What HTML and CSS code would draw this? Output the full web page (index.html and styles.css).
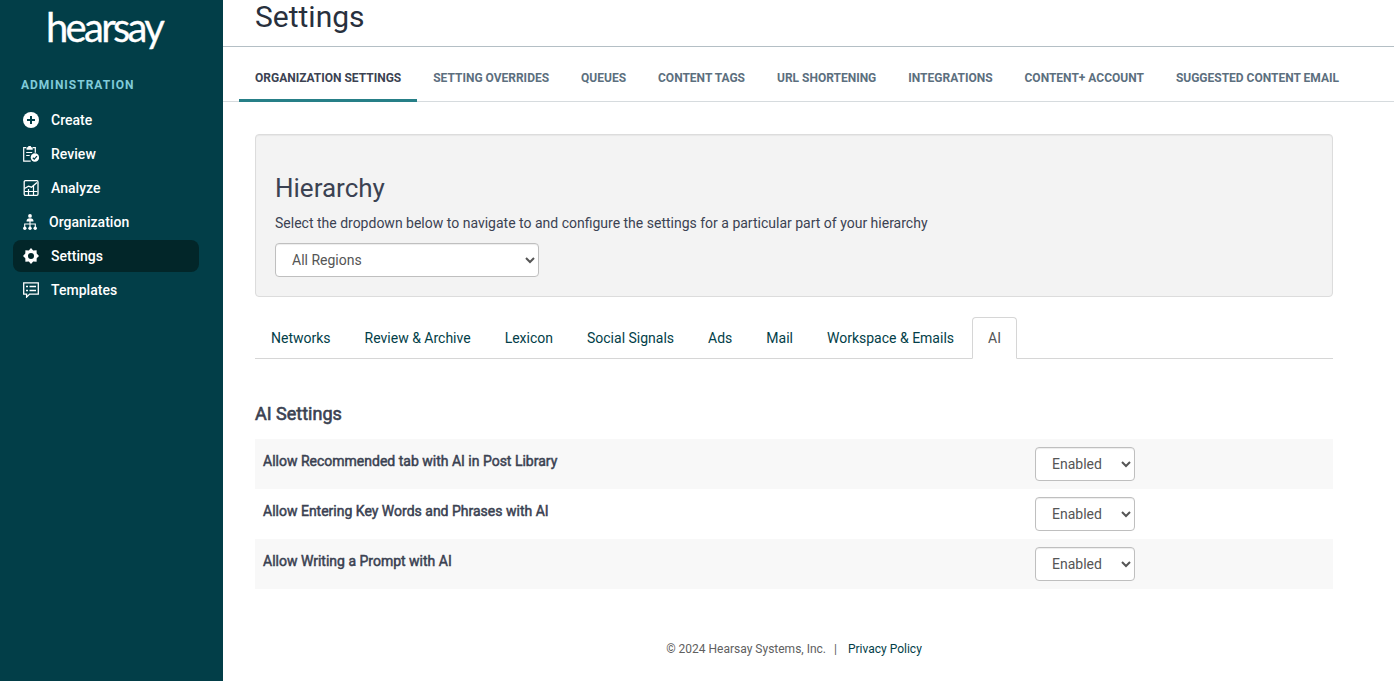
FILE: index.html
```html
<!DOCTYPE html>
<html lang="en">
<head>
    <meta charset="UTF-8">
    <meta name="viewport" content="width=device-width, initial-scale=1.0">
    <title>Settings | Hearsay</title>
    <link rel="stylesheet" href="styles.css">
</head>
<body>
    <aside class="sidebar">
        <div class="logo">hearsay</div>
        <h2 class="sidebar-title">Administration</h2>
        <nav class="side-nav">
            <a class="side-link" href="#">
                <svg class="icon" viewBox="0 0 16 16"><circle cx="8" cy="8" r="8" fill="#fff"/><path d="M8 4v8M4 8h8" stroke="#023e48" stroke-width="2"/></svg>
                <span>Create</span>
            </a>
            <a class="side-link" href="#">
                <svg class="icon" viewBox="0 0 16 16"><path d="M3 1.7H.7v13.4h7M10 1.7h2.3v5" fill="none" stroke="#fff" stroke-width="1.2"/><path d="M3.5 1.2h1.6a1.5 1.5 0 0 1 3 0h1.6v2.6H3.5z" fill="#fff"/><path d="M3.2 6.5h6M3.2 9.5h3.500" stroke="#fff" stroke-width="1"/><circle cx="11.900" cy="11.500" r="4.200" fill="#fff"/><path d="M9.800 11.800l1.400 1.300 2.800-3" fill="none" stroke="#023e48" stroke-width="1.200"/></svg>
                <span>Review</span>
            </a>
            <a class="side-link" href="#">
                <svg class="icon" viewBox="0 0 16 16"><rect x="1.2" y=".7" width="13.800" height="14.600" rx="1.200" fill="none" stroke="#fff" stroke-width="1.300"/><path d="M1.500 8.500l4-2.300 3 1 5.500-4.700" fill="none" stroke="#fff" stroke-width="1.300"/><path d="M1.500 11.500h13M5.500 9v6M10.500 5.500V15" fill="none" stroke="#fff" stroke-width="1.200"/></svg>
                <span>Analyze</span>
            </a>
            <a class="side-link side-link-org" href="#">
                <svg class="icon" viewBox="0 0 16 16"><circle cx="7" cy="1.900" r="1.900" fill="#fff"/><path d="M3.500 7.500a3.500 3.200 0 0 1 7 0z" fill="#fff"/><path d="M7 7v7M1.700 13v-3h10.600v3" fill="none" stroke="#fff" stroke-width="1.100"/><circle cx="1.800" cy="14.200" r="1.700" fill="#fff"/><circle cx="7" cy="14.200" r="1.700" fill="#fff"/><circle cx="12.200" cy="14.200" r="1.700" fill="#fff"/></svg>
                <span>Organization</span>
            </a>
            <a class="side-link active" href="#">
                <svg class="icon" viewBox="0 0 16 16"><path fill="#fff" fill-rule="evenodd" d="M8 0l2.200 2.400 3.400-.200.100 3.400L16 8l-2.300 2.300-.100 3.400-3.400-.100L8 16l-2.200-2.400-3.400.100-.100-3.400L0 8l2.300-2.400.100-3.400 3.400.200zM8 5a3 3 0 1 0 0 6 3 3 0 0 0 0-6z"/></svg>
                <span>Settings</span>
            </a>
            <a class="side-link" href="#">
                <svg class="icon" viewBox="0 0 16 16"><path d="M.7.900h14.600v11.200H6.600l-3 3v-3H.7z" fill="none" stroke="#fff" stroke-width="1.300"/><path d="M3 4.500h2M3 8.500h2M6.500 4.500h6.500M6.500 8.500h6.500" stroke="#fff" stroke-width="1.500"/></svg>
                <span>Templates</span>
            </a>
        </nav>
    </aside>

    <main class="main">
        <header class="page-header">
            <h1>Settings</h1>
        </header>
        <nav class="top-tabs">
            <a class="top-tab active" href="#">Organization Settings</a>
            <a class="top-tab" href="#">Setting Overrides</a>
            <a class="top-tab" href="#">Queues</a>
            <a class="top-tab" href="#">Content Tags</a>
            <a class="top-tab" href="#">URL Shortening</a>
            <a class="top-tab" href="#">Integrations</a>
            <a class="top-tab" href="#">Content+ Account</a>
            <a class="top-tab" href="#">Suggested Content Email</a>
        </nav>

        <div class="content">
            <section class="well">
                <h2>Hierarchy</h2>
                <p>Select the dropdown below to navigate to and configure the settings for a particular part of your hierarchy</p>
                <select class="select select-region">
                    <option>All Regions</option>
                </select>
            </section>

            <nav class="tabs">
                <a class="tab" href="#">Networks</a>
                <a class="tab" href="#">Review &amp; Archive</a>
                <a class="tab" href="#">Lexicon</a>
                <a class="tab" href="#">Social Signals</a>
                <a class="tab" href="#">Ads</a>
                <a class="tab" href="#">Mail</a>
                <a class="tab" href="#">Workspace &amp; Emails</a>
                <a class="tab active" href="#">AI</a>
            </nav>

            <h3>AI Settings</h3>
            <div class="setting-row">
                <label for="recommended">Allow Recommended tab with AI in Post Library</label>
                <select class="select" id="recommended"><option>Enabled</option><option>Disabled</option></select>
            </div>
            <div class="setting-row">
                <label for="keywords">Allow Entering Key Words and Phrases with AI</label>
                <select class="select" id="keywords"><option>Enabled</option><option>Disabled</option></select>
            </div>
            <div class="setting-row">
                <label for="prompt">Allow Writing a Prompt with AI</label>
                <select class="select" id="prompt"><option>Enabled</option><option>Disabled</option></select>
            </div>

            <footer class="footer">
                <span>© 2024 Hearsay Systems, Inc.</span>
                <span class="divider">|</span>
                <a href="#">Privacy Policy</a>
            </footer>
        </div>
    </main>
</body>
</html>
```
FILE: styles.css
```css
* {
    box-sizing: border-box;
}

body {
    display: flex;
    margin: 0;
    height: 681px;
    overflow: hidden;
    font-family: Roboto, sans-serif;
    font-size: 14px;
    line-height: 20px;
    color: #3b4252;
    background: #fff;
}

a {
    color: #023e48;
    text-decoration: none;
}

h1, h2, h3, p {
    margin: 0;
    font-weight: 400;
}

/* Sidebar */
.sidebar {
    flex: none;
    width: 223px;
    background: #023e48;
}

.logo {
    height: 64px;
    padding: 5px 0 0 46px;
    font-family: Lato, sans-serif;
    font-size: 40px;
    line-height: 44px;
    letter-spacing: -2.7px;
    color: #fff;
    -webkit-text-stroke: 0.3px #fff;
}

.sidebar-title {
    padding: 11px 21px 0;
    font-size: 12px;
    font-weight: 700;
    letter-spacing: 1px;
    text-transform: uppercase;
    color: #80cbd9;
}

.side-nav {
    display: flex;
    flex-direction: column;
    gap: 2px;
    padding: 9px 24px 0 13px;
}

.side-link {
    display: flex;
    align-items: center;
    gap: 12px;
    height: 32px;
    padding: 0 10px;
    border-radius: 8px;
    font-weight: 500;
    letter-spacing: 0.03px;
    color: #fff;
}

.side-link-org {
    gap: 10px;
}

.side-link.active {
    background: #022629;
}

.icon {
    flex: none;
    width: 16px;
    height: 16px;
}

/* Main column */
.main {
    flex: 1;
}

.page-header {
    height: 47px;
    padding-left: 32px;
    border-bottom: 1px solid #b4bfc5;
}

.page-header h1 {
    font-size: 30px;
    line-height: 34px;
    color: #28303d;
}

.top-tabs {
    display: flex;
    height: 55px;
    padding-left: 16px;
    border-bottom: 1px solid #d6dbde;
}

.top-tab {
    height: 55px;
    padding: 21px 16px 0;
    font-size: 12px;
    font-weight: 700;
    letter-spacing: -0.005px;
    text-transform: uppercase;
    white-space: nowrap;
    color: #5c6f7e;
}

.top-tab.active {
    border-bottom: 3px solid #267f87;
    color: #3b4252;
}

.content {
    padding: 32px 61px 0 32px;
}

.well {
    height: 163px;
    padding: 38px 19px 0;
    border: 1px solid #dcdcdc;
    border-radius: 4px;
    background: #f3f3f3;
    box-shadow: inset 0 1px 1px rgba(0, 0, 0, 0.05);
}

.well h2 {
    font-size: 26px;
    line-height: 30px;
}

.well p {
    margin: 10px 0;
}

.select {
    display: block;
    width: 100px;
    height: 34px;
    padding: 6px 0 6px 12px;
    border: 1px solid #bfbfbf;
    border-radius: 4px;
    font-family: inherit;
    font-size: 14px;
    color: #555;
    background: #fff;
    box-shadow: inset 0 1px 1px rgba(0, 0, 0, 0.075);
}

.select-region {
    width: 264px;
}

.tabs {
    display: flex;
    gap: 2px;
    height: 42px;
    margin-top: 20px;
    border-bottom: 1px solid #d6d6d6;
}

.tab {
    height: 42px;
    padding: 10px 15px 0;
    border: 1px solid transparent;
    white-space: nowrap;
}

.tab.active {
    border-color: #d6d6d6;
    border-bottom-color: #fff;
    border-radius: 4px 4px 0 0;
    color: #555;
    background: #fff;
}

h3 {
    margin: 45px 0 15px;
    font-size: 18px;
    -webkit-text-stroke: 0.6px currentColor;
}

.setting-row {
    display: grid;
    grid-template-columns: 772px 1fr;
    height: 50px;
    padding: 8px;
}

.setting-row:nth-of-type(odd) {
    background: #f8f8f8;
}

.setting-row label {
    padding-top: 4px;
    -webkit-text-stroke: 0.5px currentColor;
}

.footer {
    display: flex;
    justify-content: center;
    margin-top: 50px;
    font-size: 12px;
    color: #606060;
}

.divider {
    margin: 0 11px 0 8px;
}
```
